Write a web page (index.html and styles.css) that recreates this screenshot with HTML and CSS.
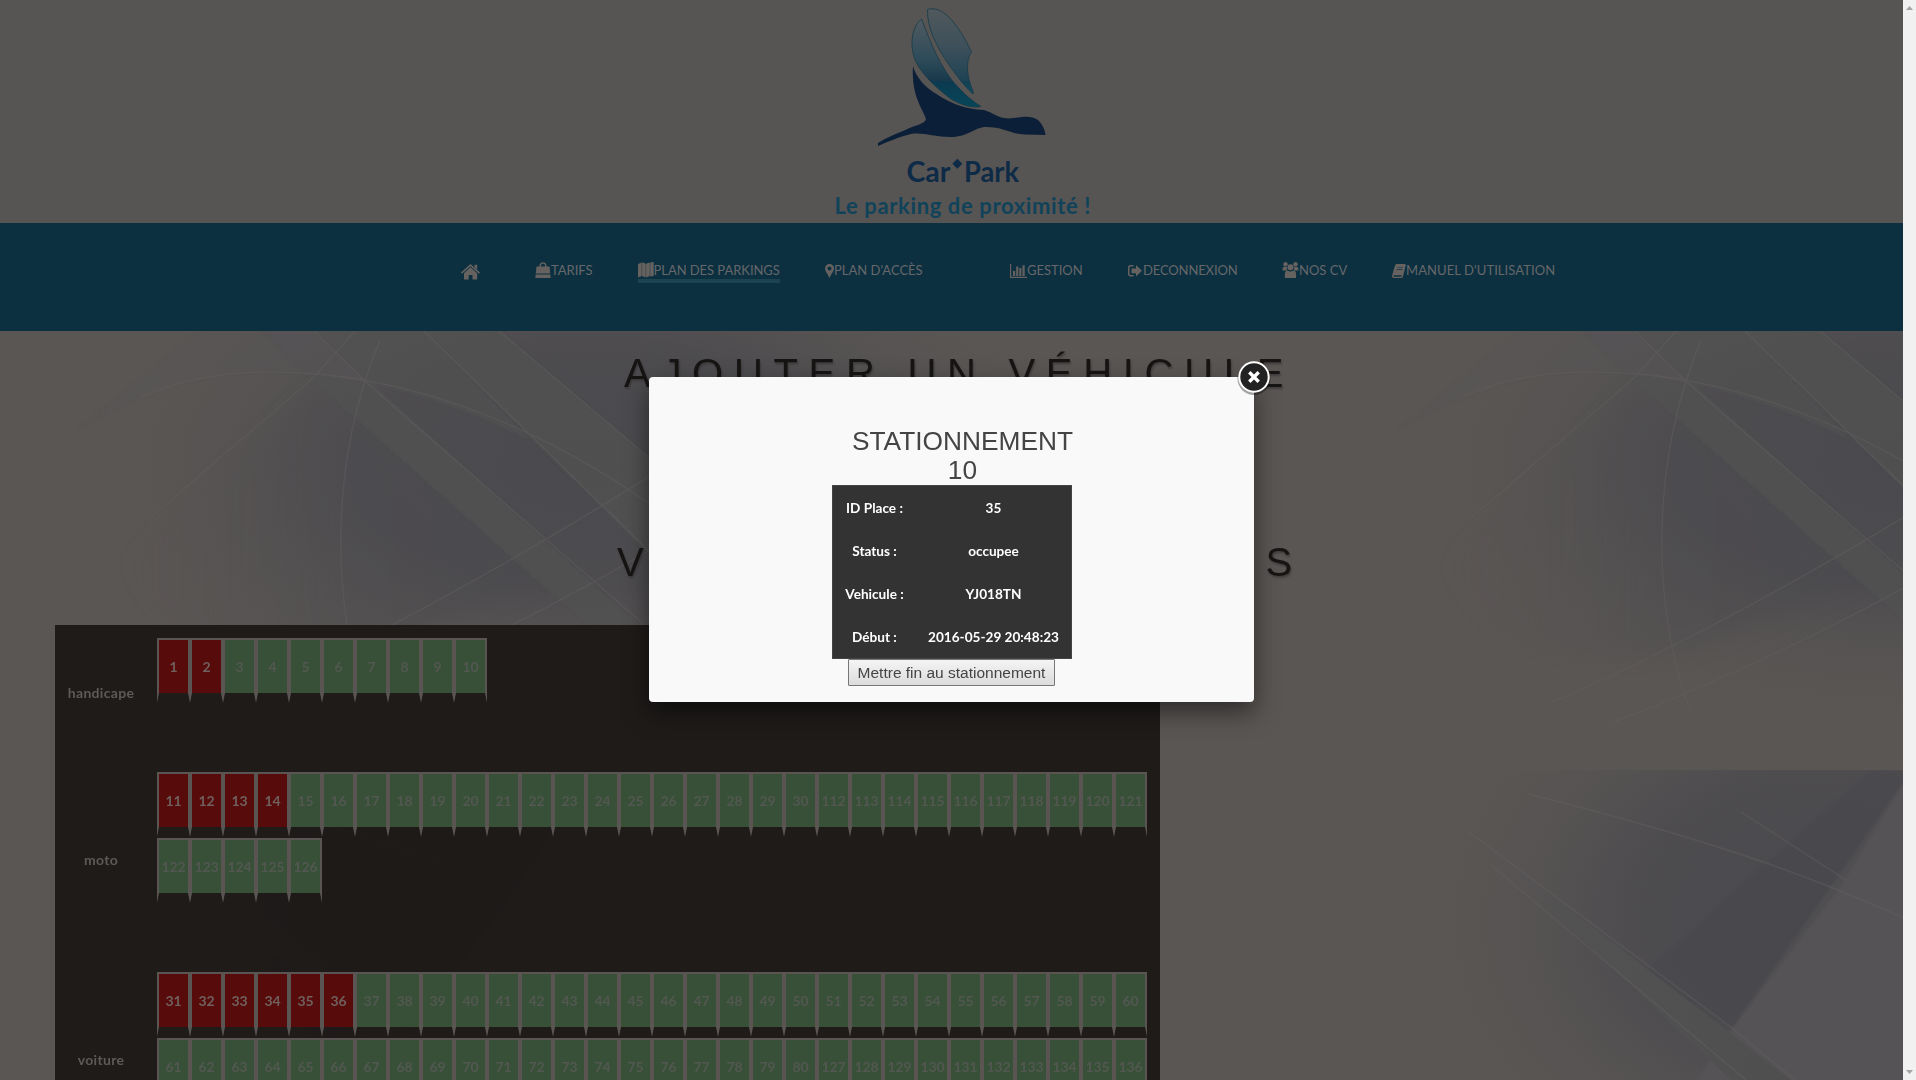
FILE: index.html
```html
<!DOCTYPE html>
<html lang="fr">
<head>
<meta charset="utf-8">
<title>Car'Park - Plan des parkings</title>
<link rel="stylesheet" href="styles.css">
</head>
<body>
<div class="page">
  <header class="header">
    <svg class="logo" viewBox="0 0 290 223" role="img">
      <defs>
        <linearGradient id="wing" x1="0" y1="0" x2="0" y2="1">
          <stop offset="0" stop-color="#505a60"/><stop offset=".45" stop-color="#2f4c5a"/><stop offset=".7" stop-color="#17394b"/><stop offset=".71" stop-color="#0c3a50"/><stop offset="1" stop-color="#07465a"/>
        </linearGradient>
        <linearGradient id="wing2" x1="0" y1="0" x2="0" y2="1">
          <stop offset="0" stop-color="#50585c"/><stop offset=".4" stop-color="#40515b"/><stop offset=".84" stop-color="#1f4354"/><stop offset=".85" stop-color="#124052"/><stop offset="1" stop-color="#144b5f"/>
        </linearGradient>
      </defs>
      <path fill="url(#wing)" stroke="#143b49" stroke-width=".8" d="M101.500 19C91 27 89 48 96.500 63C104 77 119 90 131 99C143 106 153 108 161 106.500C149 99 139 89 131 79C115 57 108 35 101.500 19Z"/>
      <path fill="url(#wing2)" stroke="#143b49" stroke-width=".8" d="M107.500 9.500C121 5 137 21 151.500 52C145 61 147 78 153 91V94C144 86 136 75 127 62C116 45 107 28 107.500 9.500Z"/>
      <path fill="#0b2038" d="M93 66C96 78 106 88 118 95C132 104 145 109 164 110C174 113 178 118 188 118.500C200 118 209 114 218 120C222 124 225 129 225.500 135L205 134.500C190 134 184 127 166 127C155 127 148 137 131 137C113 137 103 132 91 134C79 137 67 142 58 146V143C69 136 81 132 92 127C98 125 105 123 106 119C103 109 91 96 93 66Z"/>
      <text class="brand" x="86.500" y="181.500" textLength="44" lengthAdjust="spacingAndGlyphs">Car</text>
      <path fill="#0d2a47" d="M137.300 158.800L142.300 163.800L137.300 168.800L132.300 163.800Z"/>
      <text class="brand" x="144" y="181.500" textLength="55" lengthAdjust="spacingAndGlyphs">Park</text>
      <text class="slogan" x="14.500" y="214" textLength="256" lengthAdjust="spacing">Le parking de proximité !</text>
    </svg>
  </header>
  <nav class="nav">
    <a class="item"><svg class="home" viewBox="0 0 19 16"><path d="M9.500 0L19 8.500L18 9.700L9.500 2.200L1 9.700L0 8.500ZM13.500 .8H16.200V5.500L13.500 3ZM9.500 3.300L16.200 9.300V15.500H11.500V11H7.700V15.500H3V9.300Z"/></svg></a>
    <a class="item"><svg class="bag" viewBox="0 0 16 16"><path fill-rule="evenodd" d="M1.500 4.500H4.500V3.500C4.500-1 11.500-1 11.500 3.500V4.500H14.500L15.200 11.500H.8ZM6 4.500H10V3.500C10 1 6 1 6 3.500ZM.7 12.500H15.300L15.700 16H.3Z"/></svg><span>TARIFS</span></a>
    <a class="item active"><svg class="map" viewBox="0 0 16 16"><path d="M0 2L3.700 .5V14L0 15.500ZM4.100 .3L7.700 1.800V15.500L4.100 14ZM8.100 1.800L11.800 .5V14L8.100 15.500ZM12.200 .5L15.700 0V14L12.200 14.500Z"/></svg><span>PLAN DES PARKINGS</span></a>
    <a class="item"><svg class="pin" viewBox="0 0 9 14"><path fill-rule="evenodd" d="M4.500 0C7 0 9 2 9 4.500C9 7 6 10.500 4.500 14C3 10.500 0 7 0 4.500C0 2 2 0 4.500 0ZM4.500 2.400A2.100 2.100 0 1 0 4.500 6.600A2.100 2.100 0 1 0 4.500 2.400Z"/></svg><span>PLAN D'ACCÈS</span></a>
    <a class="item"><svg class="chart" viewBox="0 0 17 14"><path d="M0 0H1.200V12.800H17V14H0ZM3 7H5.200V12H3ZM6.200 2.500H8.300V12H6.200ZM9.300 4H11.400V12H9.300ZM12.500 1.200H14.700V12H12.500Z"/></svg><span>GESTION</span></a>
    <a class="item"><svg class="exit" viewBox="0 0 14 14"><path d="M5.500 1V2.500H2.800C2 2.500 1.500 3 1.500 4V9.500C1.500 10.500 2 11 2.800 11H5.500V12.500H2.500C1 12.500 0 11.500 0 10V3.500C0 2 1 1 2.500 1ZM3.500 4.500H8V1L14 6.800L8 12.500V9.200H3.500Z"/></svg><span>DECONNEXION</span></a>
    <a class="item"><svg class="users" viewBox="0 0 17 16"><circle cx="3.500" cy="2.300" r="2.200"/><circle cx="13.500" cy="2.300" r="2.200"/><path d="M.5 8.500C.3 6 1 4.500 3 4.800L5 5C4.500 7 5 8 5.500 8.500ZM16.500 8.500C16.700 6 16 4.500 14 4.800L12 5C12.500 7 12 8 11.500 8.500Z"/><circle cx="8.500" cy="5.300" r="3"/><path d="M3 16C2.500 12 3 8.500 5.500 8.500Q8.500 10.500 11.500 8.500C14 8.500 14.500 12 14 16Z"/></svg><span>NOS CV</span></a>
    <a class="item"><svg class="book" viewBox="0 0 14 14"><path fill-rule="evenodd" d="M4.500 0H13Q14 .5 13.700 1.500L11 12.500Q10.700 14 9.500 14H1.500Q-.3 13.500 .1 11.500L3 1.500Q3.500 0 4.500 0ZM1.600 11.300Q1 12.700 2.200 12.800H9.200L9.700 11.300ZM5.300 3L5.200 3.600H10.900L11 3ZM4.700 5.300L4.600 5.900H10.300L10.400 5.300Z"/></svg><span>MANUEL D'UTILISATION</span></a>
  </nav>
  <main class="main">
    <svg class="backdrop" viewBox="0 331 1903 749" preserveAspectRatio="none" aria-hidden="true">
      <defs>
        <radialGradient id="dark" cx=".5" cy=".5" r=".5"><stop offset="0" stop-color="#4a494d"/><stop offset=".45" stop-color="#4b4a4e" stop-opacity=".85"/><stop offset="1" stop-color="#5b5754" stop-opacity="0"/></radialGradient>
        <linearGradient id="fade" x1="0" y1="0" x2="1" y2="0"><stop offset="0" stop-color="#545254" stop-opacity="0"/><stop offset=".5" stop-color="#4d4c4f"/><stop offset="1" stop-color="#48474d"/></linearGradient>
        <linearGradient id="band" x1="0" y1="0" x2="1" y2="0"><stop offset="0" stop-color="#585556" stop-opacity=".2"/><stop offset=".3" stop-color="#535253"/><stop offset="1" stop-color="#504f50"/></linearGradient>
        <filter id="soft" x="-5%" y="-5%" width="110%" height="110%"><feGaussianBlur stdDeviation="1"/></filter>
        <filter id="wide" x="-10%" y="-10%" width="120%" height="120%"><feGaussianBlur stdDeviation="9"/></filter>
        <g id="tile">
          <ellipse cx="590" cy="465" rx="520" ry="275" fill="url(#dark)"/>
          <path d="M120 562L313 390L540 580L370 650Q180 680 120 562Z" fill="url(#fade)" opacity=".35" filter="url(#wide)"/>
          <g filter="url(#soft)">
            <path d="M260 330H313L650 636H600L313 380Z" fill="#535253" opacity=".8"/>
            <path d="M423 330H498L660 467V565Z" fill="#535253" opacity=".8"/>
            <path d="M77 430Q180 372 266 372Q316 371 367 383L313 330H200Z" fill="#565455" opacity=".35"/>
            <path d="M367 383Q450 400 529 440L423 330H313Z" fill="#535253" opacity=".65"/>
          </g>
          <g class="rays">
            <path d="M140 398C185 377 230 372 266 372C400 370 540 425 655 508"/>
            <path d="M313 330L367 383L650 630"/>
            <path d="M423 330L660 562"/><path d="M498 330L660 467"/>
            <path d="M150 518L313 378L356 330"/>
            <path d="M380 340C330 460 330 600 368 708"/>
            <path d="M230 703Q420 620 650 476"/><path d="M293 722Q470 655 650 550"/>
          </g>
        </g>
        <clipPath id="lowclip"><rect x="0" y="770" width="660" height="320"/></clipPath>
        <g id="tiletop" clip-path="url(#lowclip)">
          <ellipse cx="500" cy="920" rx="430" ry="330" fill="url(#dark)"/>
          <path d="M582 782L411 1028L372 1085H660V770H590Z" fill="#555354" filter="url(#soft)"/>
          <path d="M550 770H590L517 890L411 1028L320 975Z" fill="#47464c" opacity=".4" filter="url(#soft)"/>
          <path d="M148 832L470 1080H410Z" fill="url(#band)"/>
          <g class="rays"><path d="M148 832L411 1028L480 1085"/><path d="M207 794Q400 842 517 890L600 925"/><path d="M420 812L525 880"/><path d="M170 865L425 1080"/></g>
        </g>
      </defs>
      <rect x="0" y="331" width="1903" height="749" fill="#5a5654"/>
      <use href="#tile"/><use href="#tile" x="1321"/>
      <use href="#tiletop"/><use href="#tiletop" x="1321"/>
    </svg>
    <h1 class="title">AJOUTER UN VÉHICULE</h1>
    <h1 class="title second"><span>V</span><span>S</span></h1>
    <div class="lots">
      <section class="lot"><h2 class="kind">handicape</h2><div class="places" data-ranges="1-10" data-busy="2"></div></section>
      <section class="lot tall"><h2 class="kind">moto</h2><div class="places" data-ranges="11-30,112-126" data-busy="4"></div></section>
      <section class="lot tall"><h2 class="kind">voiture</h2><div class="places" data-ranges="31-80,127-136" data-busy="6"></div></section>
    </div>
  </main>
</div>
<div class="scrollbar"><svg viewBox="0 0 13 6"><path d="M3 5L6.500 1L10 5Z"/></svg><svg viewBox="0 0 13 6"><path d="M3 1L6.500 5L10 1Z"/></svg></div>
<div class="popup">
  <h3 class="popup-title">STATIONNEMENT<br>10</h3>
  <dl class="details">
    <dt>ID Place :</dt><dd>35</dd>
    <dt>Status :</dt><dd>occupee</dd>
    <dt>Vehicule :</dt><dd>YJ018TN</dd>
    <dt>Début :</dt><dd>2016-05-29 20:48:23</dd>
  </dl>
  <button class="end">Mettre fin au stationnement</button>
  <svg class="close" viewBox="0 0 36 36"><circle cx="18" cy="19.500" r="16.500" fill="#000" opacity=".35"/><circle cx="18" cy="18" r="14.700" fill="#222" stroke="#fff" stroke-width="2"/><path d="M13.300 13.300L22.700 22.700M22.700 13.300L13.300 22.700" stroke="#fff" stroke-width="3.400"/></svg>
</div>
<script src="script.js"></script>
</body>
</html>
```
FILE: styles.css
```css
* { box-sizing: border-box; }
body { margin: 0; width: 1916px; height: 1080px; display: flex; overflow: hidden; position: relative; background: #5a5654; font-family: Lato, "Liberation Sans", sans-serif; }
.page { width: 1903px; height: 1080px; overflow: hidden; }
.header { height: 223px; background: #575454; padding-left: 820px; }
.logo { display: block; width: 290px; height: 223px; }
.brand { font: 700 28px Lato, sans-serif; fill: #0d2a47; }
.slogan { font: 700 22px Lato, sans-serif; fill: #10435a; }
.nav { height: 108px; background: #0c3040; padding: 39px 0 0 461px; display: grid; grid-template-columns: 74px 102.5px 187.5px 185px 118px 154px 110px 170px; align-items: start; }
.item { display: flex; align-items: center; height: 17px; color: #66676a; font-size: 13px; line-height: 17px; white-space: nowrap; }
.item svg { fill: #66625f; flex: none; height: 14px; }
.item .home { width: 19px; height: 16px; margin-top: 2px; }
.item .bag, .item .map { width: 16px; height: 16px; margin-top: -2px; }
.item .pin { width: 9px; }
.item .chart { width: 17px; }
.item .exit { width: 14px; margin-right: 1px; }
.item .exit + span { letter-spacing: -.12px; }
.item .users { width: 17px; height: 16px; margin-top: -2px; }
.item .book { width: 14px; }
.item .book + span { letter-spacing: .08px; }
.active { justify-self: start; box-sizing: content-box; border-bottom: 4px solid #1b4350; }
.active span { letter-spacing: -.05px; }
.main { position: relative; height: 749px; overflow: hidden; }
.backdrop { position: absolute; inset: 0; width: 1903px; height: 749px; }
.rays { fill: none; stroke: #625f5e; stroke-width: 1.4; opacity: .5; }
.title { position: relative; margin: 0; padding: 19px 0 0 624px; height: 189px; font: 400 40px/46px "Liberation Sans", Arial, sans-serif; letter-spacing: 10.7px; color: #171514; text-shadow: 1px 2px 2px rgba(50, 47, 49, .6); white-space: nowrap; }
.title.second { display: flex; justify-content: space-between; width: 1303px; height: 105px; padding-left: 617px; }
.lots { position: relative; width: 1105px; margin-left: 55px; padding-top: 1px; background: rgba(27, 23, 21, .94); }
.lot { display: grid; grid-template-columns: 102px 990px; height: 134px; align-items: center; }
.lot.tall { height: 200px; }
.kind { margin: 0; width: 92px; text-align: center; font-size: 14px; line-height: 18px; color: #5d5a59; letter-spacing: .3px; }
.places { display: flex; flex-wrap: wrap; align-self: start; padding-top: 12px; row-gap: 1px; }
.place { width: 33px; height: 65px; border: 2px solid #5a5552; border-bottom: 10px solid transparent; background: #385037; background-clip: padding-box; text-align: center; font-size: 14px; font-weight: 700; line-height: 54px; letter-spacing: -.1px; color: #525851; display: flex; justify-content: center; }
.place.busy { background-color: #580b0b; color: #70605e; }
.scrollbar { width: 13px; height: 1080px; background: #f1f1f1; display: flex; flex-direction: column; justify-content: space-between; padding: 5px 0; }
.scrollbar svg { width: 13px; height: 6px; fill: #a3a3a3; }
.popup { position: absolute; left: 649px; top: 377px; width: 605px; height: 325px; border-radius: 4px; background: #f9f9f9; box-shadow: 0 10px 25px rgba(0, 0, 0, .5); display: flex; flex-direction: column; align-items: center; padding-top: 50px; }
.popup-title { margin: 0 0 0 22px; font: 400 26.3px/29px "Liberation Sans", Arial, sans-serif; color: #444; text-align: center; }
.details { margin: 0; width: 240px; height: 174px; padding-top: 1px; border: 1px solid #444; background: #333; color: #fff; display: grid; grid-template-columns: 84px 154px; grid-auto-rows: 43px; text-align: center; font-size: 13.6px; font-weight: 700; line-height: 42px; }
.details dd { margin: 0; white-space: nowrap; }
.end { width: 207px; height: 27px; padding: 0; border: 1px solid #777; border-radius: 1px; background: linear-gradient(#f4f4f4, #dcdcdc); color: #444; font: 15.5px "Liberation Sans", Arial, sans-serif; white-space: nowrap; }
.close { position: absolute; left: 587px; top: -18px; width: 36px; height: 36px; }
```
FILE: script.js
```js
// Fill each lot with its numbered places; the first ones are occupied.
document.querySelectorAll('.places').forEach((lot) => {
  let busy = Number(lot.dataset.busy);
  const add = (n) => {
    const place = document.createElement('span');
    place.className = busy-- > 0 ? 'place busy' : 'place';
    place.textContent = n;
    lot.appendChild(place);
  };
  lot.dataset.ranges.split(',').forEach((range) => {
    const [first, last] = range.split('-').map(Number);
    for (let n = first; n <= last; n++) add(n);
  });
});
```
